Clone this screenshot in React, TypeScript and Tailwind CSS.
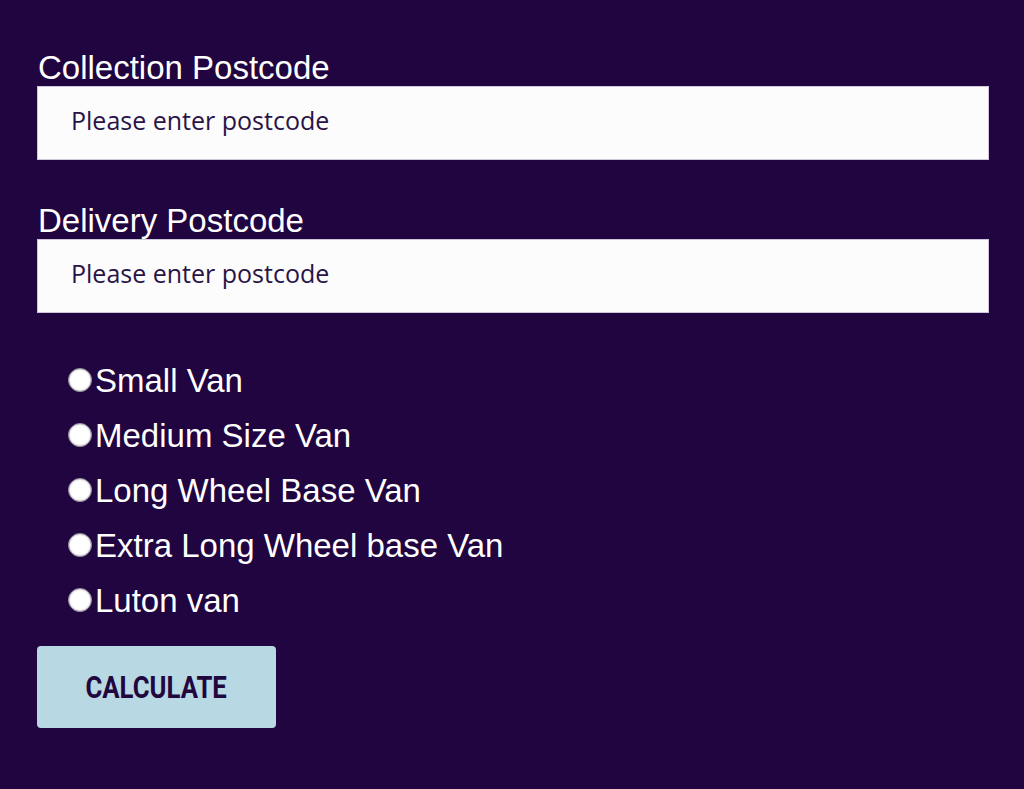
import React from "react";

const vans = [
  "Small Van",
  "Medium Size Van",
  "Long Wheel Base Van",
  "Extra Long Wheel base Van",
  "Luton van",
];

function Field({ label }: { label: string }) {
  return (
    <div className="flex flex-col">
      <label className="text-[33px] leading-[37px] text-white font-['Liberation_Sans',Arial,sans-serif] pl-px">
        {label}
      </label>
      <div className="h-[74px] w-[952px] bg-[#fcfcfc] border border-[#cfc6db] flex items-center pl-[33px] pb-[6px]">
        <span className="text-[25px] text-[#2a1447] font-['Open_Sans','Noto_Sans',sans-serif] leading-none">
          Please enter postcode
        </span>
      </div>
    </div>
  );
}

export default function App() {
  return (
    <div className="w-[1024px] h-[789px] bg-[#210540] pl-[37px] pt-[49px]">
      <Field label="Collection Postcode" />
      <div className="h-[42px]" />
      <Field label="Delivery Postcode" />
      <div className="flex flex-col pt-[40px] pl-[31px]">
        {vans.map((v) => (
          <div key={v} className="flex items-center h-[55px]">
            <span className="w-[24px] h-[24px] rounded-full bg-white border border-[#8f8a99] shadow-[inset_0_0_2px_rgba(0,0,0,0.4)] mr-[3px] mt-[-2px] shrink-0" />
            <span className="text-[33px] leading-[55px] text-white font-['Liberation_Sans',Arial,sans-serif]">
              {v}
            </span>
          </div>
        ))}
      </div>
      <div className="pt-[18px]">
        <button className="w-[239px] h-[82px] bg-[#b8d8e4] rounded-[4px] flex items-center justify-center">
          <span className="inline-block scale-x-[0.83] text-[31px] font-bold text-[#22073f] font-['Roboto',sans-serif] leading-none">
            CALCULATE
          </span>
        </button>
      </div>
    </div>
  );
}
